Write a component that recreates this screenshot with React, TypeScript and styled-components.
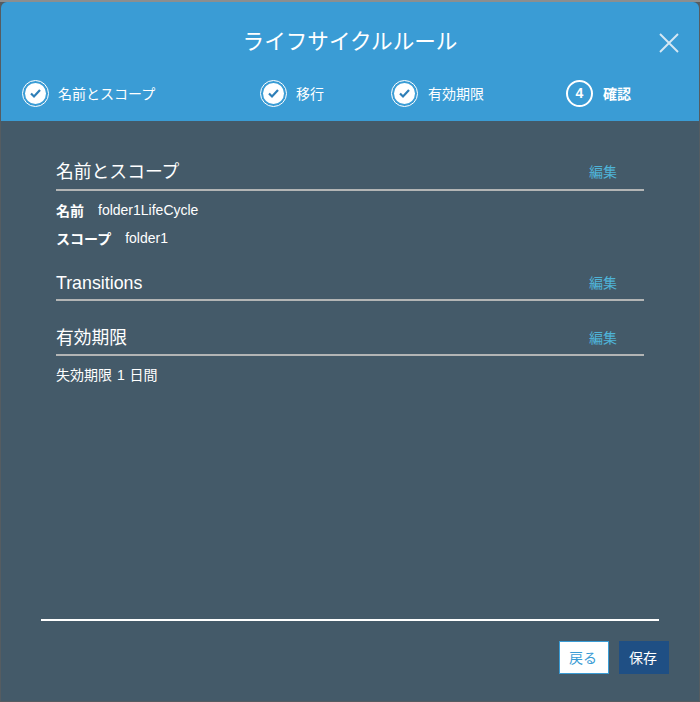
import React from "react";
import styled, { createGlobalStyle } from "styled-components";

const GlobalStyle = createGlobalStyle`
  html, body {
    margin: 0;
    padding: 0;
    background: #555c61;
  }
  body {
    font-family: "Liberation Sans", "Noto Sans CJK JP", sans-serif;
  }
`;

const Page = styled.div`
  width: 700px;
  height: 702px;
  padding: 0 1px 1px 1px;
  border-top: 2px solid #8c8e8f;
  box-sizing: border-box;
  overflow: hidden;
`;

const Modal = styled.div`
  width: 698px;
  height: 699px;
  display: flex;
  flex-direction: column;
  background: #445a69;
  border-radius: 6px 6px 0 0;
  overflow: hidden;
`;

const Header = styled.header`
  height: 119px;
  flex: none;
  background: #3a9cd5;
  color: #fff;
  display: flex;
  flex-direction: column;
`;

const TitleRow = styled.div`
  height: 77px;
  flex: none;
  display: flex;
  align-items: center;
  justify-content: center;
  position: relative;
`;

const Title = styled.h1`
  margin: 0;
  font-size: 21.6px;
  font-weight: 400;
  line-height: 28px;
  position: relative;
  top: 1px;
`;

const CloseButton = styled.button`
  position: absolute;
  top: 31px;
  right: 20px;
  width: 20px;
  height: 20px;
  padding: 0;
  border: 0;
  background: none;
  display: flex;
  cursor: pointer;
`;

const Steps = styled.ol`
  display: flex;
  margin: 0;
  padding: 0 0 0 21px;
  list-style: none;
`;

const Step = styled.li<{ $width: number }>`
  width: ${(p) => p.$width}px;
  height: 28px;
  display: flex;
  align-items: center;
  flex: none;
`;

const StepLabel = styled.span<{ $gap: number; $active?: boolean }>`
  margin-left: ${(p) => p.$gap}px;
  font-size: 14px;
  font-weight: ${(p) => (p.$active ? 700 : 400)};
  white-space: nowrap;
`;

const DoneCircle = styled.span`
  width: 27px;
  height: 27px;
  box-sizing: border-box;
  flex: none;
  border: 1px solid #fff;
  border-radius: 50%;
  display: flex;
  align-items: center;
  justify-content: center;
`;

const DoneInner = styled.span`
  width: 21px;
  height: 21px;
  border-radius: 50%;
  background: #fff;
  display: flex;
  align-items: center;
  justify-content: center;
`;

const NumberCircle = styled.span`
  width: 27px;
  height: 27px;
  box-sizing: border-box;
  flex: none;
  border: 2px solid #fff;
  border-radius: 50%;
  display: flex;
  align-items: center;
  justify-content: center;
  font-size: 14px;
  font-weight: 700;
`;

const Body = styled.main`
  flex: 1;
  padding: 35px 55px 0;
  color: #fff;
`;

const Section = styled.section<{ $gap: number }>`
  margin-bottom: ${(p) => p.$gap}px;
`;

const SectionHead = styled.div<{ $tight?: boolean }>`
  height: 35px;
  box-sizing: border-box;
  display: flex;
  align-items: center;
  justify-content: space-between;
  border-bottom: 2px solid #b3b5b5;
  padding-bottom: ${(p) => (p.$tight ? 0 : 2)}px;
`;

const SectionTitle = styled.h2`
  margin: 0;
  font-size: 17.8px;
  font-weight: 400;
  line-height: 24px;
`;

const EditLink = styled.a`
  color: #4fb4d8;
  font-size: 14px;
  line-height: 20px;
  margin-right: 27px;
  cursor: pointer;
`;

const Details = styled.dl`
  margin: 0;
  padding-top: 5px;
`;

const DetailRow = styled.div`
  height: 28px;
  display: flex;
  align-items: center;
  font-size: 14px;
`;

const DetailName = styled.dt`
  font-weight: 700;
  margin-right: 14px;
`;

const DetailValue = styled.dd`
  margin: 0;
`;

const Note = styled.p`
  margin: 0;
  padding-top: 11px;
  font-size: 14px;
  line-height: 16px;
  word-spacing: 1px;
`;

const Footer = styled.footer`
  flex: none;
  height: 82px;
  box-sizing: border-box;
  padding: 0 30px 0 40px;
`;

const FooterRule = styled.div`
  height: 2px;
  margin-right: 10px;
  background: #fff;
`;

const Actions = styled.div`
  display: flex;
  justify-content: flex-end;
  gap: 10px;
  padding-top: 20px;
`;

const Button = styled.button<{ $primary?: boolean }>`
  width: 50px;
  height: 33px;
  padding: 0 2px 2px 0;
  font-family: inherit;
  font-size: 14px;
  cursor: pointer;
  background: ${(p) => (p.$primary ? "#1f4f84" : "#fff")};
  color: ${(p) => (p.$primary ? "#fff" : "#3a9cd5")};
  border: 1px solid ${(p) => (p.$primary ? "#1f4f84" : "#3a9cd5")};
`;

const CheckIcon = () => (
  <svg width="13" height="11" viewBox="0 0 13 11" fill="none">
    <path d="M2 5.5 L5 8.5 L11 2" stroke="#2f7fb8" strokeWidth="2.2" />
  </svg>
);

const CloseIcon = () => (
  <svg width="20" height="20" viewBox="0 0 20 20" fill="none">
    <path d="M1 1 L19 19 M19 1 L1 19" stroke="#d5e8f4" strokeWidth="1.9" />
  </svg>
);

const steps = [
  { label: "名前とスコープ", width: 238, gap: 9 },
  { label: "移行", width: 131, gap: 9 },
  { label: "有効期限", width: 175, gap: 10 },
];

const App: React.FC = () => {
  return (
    <Page>
      <GlobalStyle />
      <Modal>
        <Header>
          <TitleRow>
            <Title>ライフサイクルルール</Title>
            <CloseButton aria-label="閉じる">
              <CloseIcon />
            </CloseButton>
          </TitleRow>
          <Steps>
            {steps.map((step) => (
              <Step key={step.label} $width={step.width}>
                <DoneCircle>
                  <DoneInner>
                    <CheckIcon />
                  </DoneInner>
                </DoneCircle>
                <StepLabel $gap={step.gap}>{step.label}</StepLabel>
              </Step>
            ))}
            <Step $width={100}>
              <NumberCircle>4</NumberCircle>
              <StepLabel $gap={10} $active>
                確認
              </StepLabel>
            </Step>
          </Steps>
        </Header>
        <Body>
          <Section $gap={14}>
            <SectionHead>
              <SectionTitle>名前とスコープ</SectionTitle>
              <EditLink>編集</EditLink>
            </SectionHead>
            <Details>
              <DetailRow>
                <DetailName>名前</DetailName>
                <DetailValue>folder1LifeCycle</DetailValue>
              </DetailRow>
              <DetailRow>
                <DetailName>スコープ</DetailName>
                <DetailValue>folder1</DetailValue>
              </DetailRow>
            </Details>
          </Section>
          <Section $gap={20}>
            <SectionHead $tight>
              <SectionTitle>Transitions</SectionTitle>
              <EditLink>編集</EditLink>
            </SectionHead>
          </Section>
          <Section $gap={0}>
            <SectionHead $tight>
              <SectionTitle>有効期限</SectionTitle>
              <EditLink>編集</EditLink>
            </SectionHead>
            <Note>失効期限 1 日間</Note>
          </Section>
        </Body>
        <Footer>
          <FooterRule />
          <Actions>
            <Button>戻る</Button>
            <Button $primary>保存</Button>
          </Actions>
        </Footer>
      </Modal>
    </Page>
  );
};

export default App;
